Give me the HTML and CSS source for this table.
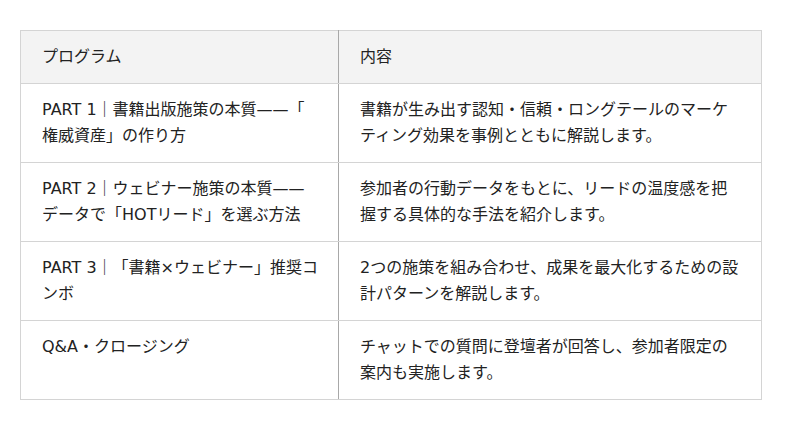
FILE: index.html
```html
<!DOCTYPE html>
<html lang="ja">
<head>
<meta charset="utf-8">
<link rel="stylesheet" href="styles.css">
</head>
<body>
<div class="wrap">
<table class="program">
  <thead>
    <tr><th class="col-a">プログラム</th><th class="col-b">内容</th></tr>
  </thead>
  <tbody>
    <tr><td>PART 1｜書籍出版施策の本質——「権威資産」の作り方</td><td>書籍が生み出す認知・信頼・ロングテールのマーケティング効果を事例とともに解説します。</td></tr>
    <tr><td>PART 2｜ウェビナー施策の本質——データで「HOTリード」を選ぶ方法</td><td>参加者の行動データをもとに、リードの温度感を把握する具体的な手法を紹介します。</td></tr>
    <tr><td>PART 3｜「書籍×ウェビナー」推奨コンボ</td><td>2つの施策を組み合わせ、成果を最大化するための設計パターンを解説します。</td></tr>
    <tr><td>Q&amp;A・クロージング</td><td>チャットでの質問に登壇者が回答し、参加者限定の案内も実施します。</td></tr>
  </tbody>
</table>
</div>
</body>
</html>
```
FILE: styles.css
```css
html, body {
  margin: 0;
  padding: 0;
  background: #ffffff;
}
.wrap {
  padding: 30px 20px;
}
.program {
  width: 742px;
  border-collapse: collapse;
  table-layout: fixed;
  font-family: "DejaVu Sans", "Noto Sans CJK JP", sans-serif;
  font-size: 16px;
  line-height: 26px;
  color: #222222;
}
.program th,
.program td {
  border: 1px solid #d4d4d4;
  padding: 13px 21px;
  text-align: left;
  vertical-align: top;
  font-weight: normal;
}
.program th:first-child,
.program td:first-child {
  border-right-color: #a8a8a8;
  padding-right: 19px;
  line-break: anywhere;
}
.program thead th {
  background: #f3f3f3;
}
.col-a {
  width: 277px;
}
```
